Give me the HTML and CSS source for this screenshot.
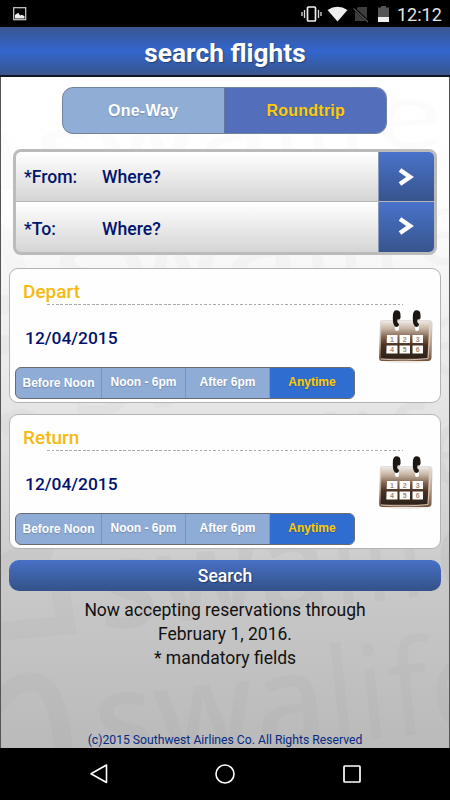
FILE: index.html
```html
<!DOCTYPE html>
<html lang="en">
<head>
<meta charset="utf-8">
<title>search flights</title>
<link rel="stylesheet" href="styles.css">
</head>
<body>
<svg class="defs" width="0" height="0" aria-hidden="true">
  <defs>
    <linearGradient id="brown" x1="0" y1="0" x2="0" y2="1"><stop offset="0" stop-color="#eeeae6"/><stop offset=".2" stop-color="#c8b5a5"/><stop offset=".43" stop-color="#80634d"/><stop offset=".65" stop-color="#483022"/><stop offset="1" stop-color="#2e2119"/></linearGradient>
    <linearGradient id="rim" x1="0" y1="0" x2="0" y2="1"><stop offset="0" stop-color="#e3dfdc"/><stop offset=".55" stop-color="#bca18d"/><stop offset="1" stop-color="#72533e"/></linearGradient>
    <symbol id="calendar" viewBox="0 0 56 54">
      <ellipse cx="28" cy="51" rx="22" ry="2" fill="#f1e9e4"/>
      <path d="M4 10H51Q54.500 10 54.500 14L53.500 48Q53.300 51 50 51H4Q.8 51 1 47L2 13Q2 10 4 10Z" fill="url(#rim)"/>
      <path d="M4 11H49.500Q51 11 51 14L49.500 48.500H4Q2.500 48.500 2.700 46L3.500 13Z" fill="url(#brown)"/>
      <path d="M3 49Q28 51 50 48.500L52.500 13" fill="none" stroke="#e6d9d0" stroke-width=".8"/>
      <path d="M19 17v2M39 17v2" stroke="#fff" stroke-width="4" stroke-linecap="round"/>
      <g fill="#1b1712"><path d="M15 4Q16-1 20 .5Q23 1 22.500 8Q21 11 20 9Q18 12 21 14Q21 17 18 17Q14 16 15 4Z"/><path d="M35 4Q36-1 40 .5Q43 1 42.500 8Q41 11 40 9Q38 12 41 14Q41 17 38 17Q34 16 35 4Z"/></g>
      <g fill="#fffdfb"><path d="M9 25h10.500v8H8.700zM21.500 25h10.500v8H21.500zM34.500 25h10.500v8H34.500zM8.600 35.500h10.900v8H8.300zM21.500 35.500h10.500v8H21.500zM34.500 35.500h10.500v8H34.500z"/></g>
      <g class="digits"><text x="14" y="31.500">1</text><text x="26.700" y="31.500">2</text><text x="39.700" y="31.500">3</text><text x="14" y="42">4</text><text x="26.700" y="42">5</text><text x="39.700" y="42">6</text></g>
    </symbol>
    <symbol id="chevron" viewBox="0 0 18 20"><path d="M2 3L12 10L2 17" fill="none" stroke="#fff" stroke-width="4.500"/></symbol>
  </defs>
</svg>
<div class="status">
  <svg class="photo" width="14" height="14" viewBox="0 0 14 14"><rect x=".7" y=".7" width="12" height="12" fill="none" stroke="#cfcfcf" stroke-width="1.200"/><path d="M2 11.500V8l2-1.500 1.500-.5L7 8.500l2-.8 2.500 1.500v2.300Z" fill="#eee"/></svg>
  <svg class="signals" width="90" height="18" viewBox="0 0 90 18">
    <rect x="6.500" y="2" width="8" height="14" rx="1" fill="none" stroke="#eee" stroke-width="1.700"/>
    <path d="M3.500 5v8M1 7v4M17.500 5v8M20 7v4" stroke="#ddd" stroke-width="1.300"/>
    <path d="M26.500 5Q36.500-1.500 46.500 5L36.500 16.500Z" fill="#eee"/>
    <path d="M57 2h9v14H54V6Z" fill="#3d3d3d"/><path d="M52.500 3L67 16.500" stroke="#000" stroke-width="2.500"/><path d="M52.500 3.500L67 17" stroke="#555" stroke-width="1.200"/>
    <path d="M80 1h5v1.500h3V17H77V2.500h3Z" fill="#555"/><path d="M77 12h11v5H77Z" fill="#eee"/>
  </svg>
  <span class="clock">12:12</span>
</div>
<header>search flights</header>
<main>
  <svg class="watermark" width="448" height="671" viewBox="1 77 448 671" aria-hidden="true">
    <g class="row r1" transform="translate(38 181) rotate(-5)"><text textLength="410" lengthAdjust="spacingAndGlyphs">swa<tspan>life</tspan></text></g>
    <g class="row r2" transform="translate(58 306) rotate(-6)"><text textLength="430" lengthAdjust="spacingAndGlyphs">swa<tspan>life</tspan></text></g>
    <g class="row r3" transform="translate(72 417) rotate(-6)"><text textLength="425" lengthAdjust="spacingAndGlyphs">swa<tspan>life</tspan></text></g>
    <g class="row r4" transform="translate(87 527) rotate(-6)"><text textLength="415" lengthAdjust="spacingAndGlyphs">swa<tspan>life</tspan></text></g>
    <g class="row r5" transform="translate(101 630) rotate(-6)"><text textLength="408" lengthAdjust="spacingAndGlyphs">swa<tspan>life</tspan></text></g>
    <g class="row r6" transform="translate(99 768) rotate(-6)"><text textLength="406" lengthAdjust="spacingAndGlyphs">swa<tspan>life</tspan></text></g>
    <g class="arches"><path class="faint" d="M-30 145Q5 110 5 190M-25 235Q12 215 20 290"/><path d="M0 305L42 302M0 345L45 341M0 430Q20 410 35 425"/><path d="M-5 571Q25 545 52 555M-5 632L66 625L58 575"/><path d="M-5 708Q15 676 38 683Q60 690 65 765"/></g>
  </svg>
  <div class="trip"><span>One-Way</span><span class="on">Roundtrip</span></div>
  <div class="route">
    <div class="place"><b>*From:</b><b>Where?</b><i><svg><use href="#chevron"/></svg></i></div>
    <div class="place to"><b>*To:</b><b>Where?</b><i><svg><use href="#chevron"/></svg></i></div>
  </div>
  <section>
    <h2>Depart</h2>
    <div class="rule"></div>
    <div class="day"><span>12/04/2015</span><svg><use href="#calendar"/></svg></div>
    <div class="times"><span>Before Noon</span><span>Noon - 6pm</span><span>After 6pm</span><span class="on">Anytime</span></div>
  </section>
  <section>
    <h2>Return</h2>
    <div class="rule"></div>
    <div class="day"><span>12/04/2015</span><svg><use href="#calendar"/></svg></div>
    <div class="times"><span>Before Noon</span><span>Noon - 6pm</span><span>After 6pm</span><span class="on">Anytime</span></div>
  </section>
  <div class="search">Search</div>
  <p>Now accepting reservations through<br>February 1, 2016.<br>* mandatory fields</p>
  <footer>(c)2015 Southwest Airlines Co. All Rights Reserved</footer>
</main>
<nav>
  <svg width="20" height="22" viewBox="0 0 20 22"><path d="M18.500 2V19.500L3 10.800Z" fill="none" stroke="#fff" stroke-width="1.600" stroke-linejoin="round"/></svg>
  <svg width="20" height="22" viewBox="0 0 20 22"><circle cx="10" cy="11" r="9" fill="none" stroke="#fff" stroke-width="1.600"/></svg>
  <svg width="20" height="22" viewBox="0 0 20 22"><rect x="2" y="3" width="16" height="16" rx=".8" fill="none" stroke="#fff" stroke-width="1.700"/></svg>
</nav>
</body>
</html>
```

FILE: styles.css
```css
* { box-sizing: border-box; }
body { margin: 0; width: 450px; height: 800px; overflow: hidden; display: flex; flex-direction: column; background: #000; font-family: Roboto, sans-serif; }
.defs { position: absolute; }
.status { height: 27px; flex: none; display: flex; align-items: center; padding: 0 8px 0 13px; color: #e4e4e4; }
.signals { margin-left: auto; }
.clock { font-size: 18px; width: 45px; margin-left: 6px; line-height: 27px; padding-top: 2px; white-space: nowrap; }
header { height: 50px; flex: none; border-bottom: 2px solid #101623; background: linear-gradient(#39558f, #3266ce 50%, #39558b); color: #fff; font-size: 26.300px; font-weight: 700; line-height: 52px; text-align: center; text-shadow: 1px 1px 1px #294371; }
main { position: relative; height: 671px; flex: none; overflow: hidden; border: solid #555; border-width: 0 1px; background: linear-gradient(#fff 0%, #fefefe 20%, #e4e4e4 50%, #c9c9c9 75%, #bababa 100%); padding: 10px 8px 0; display: flex; flex-direction: column; }
.watermark { position: absolute; inset: 0; }
main > :not(.watermark) { position: relative; }
.row { font-family: "Open Sans", sans-serif; font-weight: 600; fill: #000; fill-opacity: .018; font-size: 125px; }
.row tspan { font-weight: 400; }
.r1 { fill-opacity: .01; font-size: 90px; }
.r2 { font-size: 105px; }
.r3 { font-size: 112px; }
.r4 { font-size: 118px; fill-opacity: .025; }
.r5 { fill-opacity: .027; }
.r6 { fill-opacity: .02; font-size: 132px; }
.arches { fill: none; stroke: #000; stroke-opacity: .02; stroke-width: 19px; }
.arches .faint { stroke-opacity: .01; }
.trip { width: 325px; height: 47px; margin-left: 53px; border: 1px solid #71839a; border-radius: 11px; overflow: hidden; display: flex; flex: none; font: 700 16px/45px "Liberation Sans", sans-serif; letter-spacing: .25px; text-align: center; color: #fff; background: #8fadd5; text-shadow: 0 1px 1px #7088ad; }
.trip span { flex: 1; }
.trip .on { background: #536eba; border-left: 1px solid #61789d; color: #fc0; text-shadow: 0 1px 1px #445ba0; padding-left: 1px; }
.route { width: 424px; height: 106px; flex: none; margin: 15px 0 0 4px; border: 3px solid #bbb; border-radius: 8px; overflow: hidden; background: #bbb; }
.place { height: 50px; display: grid; grid-template-columns: 78px 1fr 56px; background: linear-gradient(#fff, #d5d5d5); color: #00156e; font-size: 17.600px; line-height: 49px; padding-left: 8px; border-bottom: 1px solid #b6b6b6; }
.place b { font-weight: 500; padding-top: 1px; height: 49px; line-height: 48px; }
.to b { padding-top: 3px; }
.to { border-bottom: 0; }
.place i { display: flex; align-items: center; justify-content: center; border-left: 1px solid #8799bd; background: linear-gradient(#4973ca, #37548c); }
.place i svg { width: 18px; height: 20px; }
.to i { padding-bottom: 2px; }
section { width: 432px; height: 135px; flex: none; border: 1px solid #b3b3b3; border-radius: 9px; background: #fefefe; margin-top: 13px; display: flex; flex-direction: column; padding-left: 6px; }
section + section { margin-top: 11px; }
h2 { margin: 12px 0 1px 7px; color: #f4ba11; font-size: 19px; font-weight: 500; line-height: 22px; height: 22px; }
.rule { width: 356px; height: 1px; flex: none; margin-left: 31px; background: repeating-linear-gradient(90deg, #aaa 0 2.500px, transparent 2.500px 4.500px); }
.day { height: 62px; flex: none; display: flex; justify-content: space-between; color: #001170; font-size: 17.400px; font-weight: 500; padding: 5px 6px 0 9px; }
.day span { line-height: 56px; }
.day svg { width: 56px; height: 54px; }
.digits { font: 700 7px "Liberation Sans", sans-serif; fill: #a28a78; text-anchor: middle; }
.times { height: 32px; width: 340px; flex: none; border: 1px solid #686b70; border-radius: 6px; overflow: hidden; background: #8eacd5; display: grid; grid-template-columns: 85px 84px 84px 1fr; font: 700 12px/29px "Liberation Sans", sans-serif; color: #fff; text-align: center; text-shadow: 0 1px 1px #7289ab; white-space: nowrap; margin-left: -1px; }
.times span + span { border-left: 1px solid #7895bc; }
.times span:first-child { padding-top: 1px; }
.times .on { background: #306dd1; color: #fc0; text-shadow: 0 1px 1px #2a58a8; }
.search { width: 432px; height: 31px; flex: none; margin-top: 11px; border-radius: 10px; background: linear-gradient(#4770c6, #345288); color: #fff; font-weight: 500; font-size: 17.500px; line-height: 33px; text-align: center; text-shadow: 1px 1px 1px #253c68; }
p { margin: 7px 0 0; font-size: 17.500px; line-height: 24px; text-align: center; color: #111; }
footer { margin-top: 63px; color: #082a82; font-size: 12.200px; line-height: 15px; text-align: center; white-space: nowrap; }
nav { height: 52px; display: flex; justify-content: space-between; align-items: center; padding: 0 88px; }
```
